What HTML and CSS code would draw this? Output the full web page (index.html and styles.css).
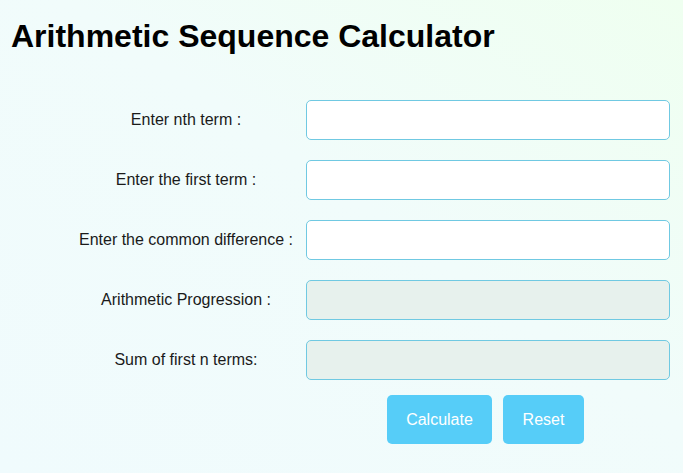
FILE: index.html
```html
<!DOCTYPE html>
<html lang="en">
<head>
<meta charset="utf-8">
<title>Arithmetic Sequence Calculator</title>
<link rel="stylesheet" href="styles.css">
</head>
<body>
<h1 class="title">Arithmetic Sequence Calculator</h1>
<form class="calc">
  <label class="label" for="n">Enter nth term :</label>
  <input class="field" id="n" type="text">
  <label class="label" for="a">Enter the first term :</label>
  <input class="field" id="a" type="text">
  <label class="label" for="d">Enter the common difference :</label>
  <input class="field" id="d" type="text">
  <label class="label" for="ap">Arithmetic Progression :</label>
  <input class="field field-out" id="ap" type="text" disabled>
  <label class="label" for="sum">Sum of first n terms:</label>
  <input class="field field-out" id="sum" type="text" disabled>
  <div class="actions">
    <button class="btn" type="button">Calculate</button>
    <button class="btn" type="reset">Reset</button>
  </div>
</form>
</body>
</html>
```
FILE: styles.css
```css
html, body {
  margin: 0;
  padding: 0;
  height: 100%;
}
body {
  background: linear-gradient(to top right, #f0fbfd 0%, #f1fcfb 55%, #effff0 100%);
  font-family: "Liberation Sans", Arial, sans-serif;
  color: #111;
}
.title {
  margin: 18px 0 0 11px;
  font-size: 32px;
  line-height: 37px;
  font-weight: bold;
  color: #000;
}
.calc {
  display: grid;
  grid-template-columns: 228px 364px;
  column-gap: 6px;
  row-gap: 20px;
  margin: 45px 0 0 72px;
  align-items: center;
}
.label {
  text-align: center;
  font-size: 16px;
  color: #1a1a1a;
}
.field {
  box-sizing: border-box;
  height: 40px;
  width: 364px;
  border: 1px solid #70c9e2;
  border-radius: 5px;
  background: #ffffff;
  margin: 0;
  font-size: 16px;
}
.field-out {
  background: #e7f1ed;
}
.actions {
  grid-column: 2;
  display: flex;
  gap: 11px;
  padding-left: 81px;
  margin-top: -5px;
}
.btn {
  height: 49px;
  padding: 0 18px;
  border: none;
  border-radius: 5px;
  background: #56cdf8;
  color: #fff;
  font-family: "Liberation Sans", Arial, sans-serif;
  font-size: 16px;
}
.btn:first-child {
  width: 105px;
}
.btn:last-child {
  width: 81px;
}
```
